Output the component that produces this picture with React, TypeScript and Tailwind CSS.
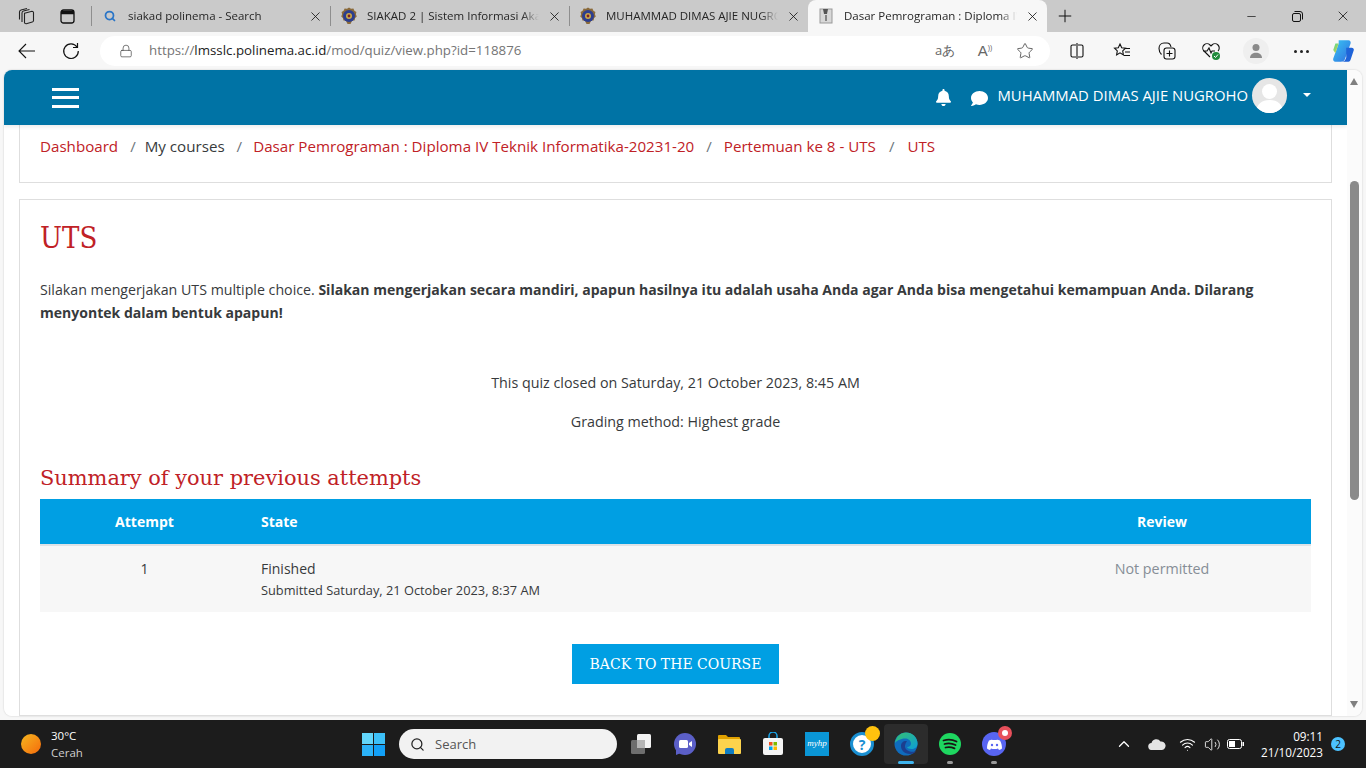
import React from "react";
import { Lock, Star, X, Plus, Minus, Search, ChevronUp, Wifi, Volume2 } from "lucide-react";
import { FaBell, FaComment } from "react-icons/fa";

const Crest = () => (
  <svg width="18" height="18" viewBox="0 0 18 18">
    <path d="M9 .5l2 1.300 2.400-.2 1 2.100 2 1.200-.5 2.300.9 2.200-1.700 1.600-.5 2.400-2.400.2L10.500 17H7.500l-1.700-3.400-2.400-.2-.5-2.400L1.200 9.400l.9-2.200-.5-2.300 2-1.200 1-2.100 2.400.2z" fill="#8a6a3a" />
    <circle cx="9" cy="9" r="6" fill="#2c3e8f" />
    <circle cx="9" cy="9" r="3" fill="#c9a94a" />
    <circle cx="9" cy="9" r="1.400" fill="#7b1f2b" />
  </svg>
);

const Tab = ({ icon, title, active, w }: { icon: React.ReactNode; title: string; active?: boolean; w: string }) => (
  <div className={`${w} h-[32px] shrink-0 flex items-center relative ${active ? "bg-[#f7f7f7] rounded-t-lg" : ""}`}>
    <div className="w-[36px] flex justify-center shrink-0">{icon}</div>
    <span className="flex-1 min-w-0 text-[11.500px] text-[#262626] whitespace-nowrap overflow-hidden" style={{ maskImage: "linear-gradient(to right,#000 90%,transparent)" }}>{title}</span>
    <div className="w-[30px] flex justify-center shrink-0"><X size={15} strokeWidth={1.300} color="#111" /></div>
  </div>
);

const Sep = () => <div className="w-px h-[20px] bg-[#8e8e8e] shrink-0" />;

const TbBtn = ({ children, w = "w-[45px]" }: { children: React.ReactNode; w?: string }) => (
  <div className={`${w} h-[30px] flex items-center justify-center shrink-0`}>{children}</div>
);

const TabStrip = () => (
  <div className="h-[32px] bg-[#cacaca] flex items-center shrink-0">
    <div className="w-[52px] flex justify-center shrink-0">
      <svg width="18" height="18" viewBox="0 0 18 18" fill="none" stroke="#222" strokeWidth="1.100">
        <path d="M7.500 6.200l7.500-2a1.500 1.500 0 0 1 1.500 1.300v8a1.500 1.500 0 0 1-1.200 1.500l-6 1.700a1.500 1.500 0 0 1-1.800-1.500z" />
        <path d="M5 15V6a2 2 0 0 1 1.500-2l6-1.500" />
        <path d="M2.500 12.500V5A2 2 0 0 1 4 3l6-1.500" />
      </svg>
    </div>
    <div className="w-[30px] flex justify-center shrink-0">
      <svg width="15" height="15" viewBox="0 0 15 15" fill="none" stroke="#111" strokeWidth="1.300">
        <rect x="1" y="1" width="13" height="13" rx="2.500" /><path d="M1 3.500h13" strokeWidth="3.500" />
      </svg>
    </div>
    <div className="w-[9px] shrink-0" />
    <Sep />
    <Tab w="w-[238px]" title="siakad polinema - Search" icon={<Search size={12} strokeWidth={3.500} color="#2a75c7" />} />
    <Sep />
    <Tab w="w-[238px]" title="SIAKAD 2 | Sistem Informasi Akademik" icon={<Crest />} />
    <Sep />
    <Tab w="w-[238px]" title="MUHAMMAD DIMAS AJIE NUGROHO" icon={<Crest />} />
    <Tab w="w-[239px]" active title="Dasar Pemrograman : Diploma IV Teknik" icon={
      <svg width="16" height="16" viewBox="0 0 16 16"><rect x="2" y="1" width="12" height="14" fill="#d8d8d8" stroke="#999" /><path d="M5 1h5l-1 5H6z" fill="#555" /><path d="M8 7v6" stroke="#333" /></svg>
    } />
    <div className="w-[36px] flex justify-center shrink-0"><Plus size={20} strokeWidth={1.200} color="#111" /></div>
    <div className="flex-1" />
    <div className="w-[46px] flex justify-center shrink-0"><Minus size={13} strokeWidth={1.300} color="#111" /></div>
    <div className="w-[46px] flex justify-center shrink-0">
      <svg width="11" height="11" viewBox="0 0 11 11" fill="none" stroke="#111"><rect x=".5" y="2.500" width="8" height="8" rx="1.500" /><path d="M2.500 .5H8A2.500 2.500 0 0 1 10.500 3v5.500" /></svg>
    </div>
    <div className="w-[46px] flex justify-center shrink-0"><X size={16} strokeWidth={1.200} color="#111" /></div>
  </div>
);

const Toolbar = () => (
  <div className="h-[38px] bg-[#f7f7f7] flex items-center shrink-0">
    <div className="w-[54px] flex justify-center shrink-0">
      <svg width="18" height="16" viewBox="0 0 18 16" fill="none" stroke="#111" strokeWidth="1.100"><path d="M17 8H1M8 1L1 8l7 7" /></svg>
    </div>
    <div className="w-[34px] flex justify-center shrink-0">
      <svg width="18" height="18" viewBox="0 0 18 18" fill="none" stroke="#111" strokeWidth="1.200"><path d="M15 5a7.300 7.300 0 1 0 1.300 4" /><path d="M15.500 1v4.500H11" /></svg>
    </div>
    <div className="w-[12px] shrink-0" />
    <div className="w-[950px] h-[30px] bg-white rounded-full flex items-center shrink-0">
      <div className="w-[49px] flex justify-center pl-[3px] shrink-0"><Lock size={14} strokeWidth={1.200} color="#444" /></div>
      <span className="text-[13.300px] text-[#757575] whitespace-nowrap">https://<span className="text-[#222]">lmsslc.polinema.ac.id</span>/mod/quiz/view.php?id=118876</span>
      <div className="flex-1" />
      <span className="w-[40px] text-center text-[13px] text-[#666]">aあ</span>
      <span className="w-[40px] text-center text-[15px] text-[#666]" style={{ fontFamily: "'Liberation Sans',sans-serif" }}>A<span className="text-[7px] align-super">))</span></span>
      <div className="w-[39px] flex justify-center"><Star size={18} strokeWidth={1.200} color="#555" /></div>
      <div className="w-[6px]" />
    </div>
    <TbBtn w="w-[54px]">
      <svg width="18" height="18" viewBox="0 0 18 18" fill="none" stroke="#111" strokeWidth="1.100"><path d="M8 3H4.500A1.500 1.500 0 0 0 3 4.500v9A1.500 1.500 0 0 0 4.500 15H8M10 3h3.500A1.500 1.500 0 0 1 15 4.500v9a1.500 1.500 0 0 1-1.500 1.500H10M9 1v16" /></svg>
    </TbBtn>
    <TbBtn w="w-[36px]">
      <svg width="18" height="18" viewBox="0 0 18 18" fill="none" stroke="#111" strokeWidth="1.100"><path d="M7 2l1.700 3.700 3.800.5-2.800 2.700.7 4-3.400-2-3.400 2 .7-4L1.500 6.200l3.800-.5zM12 6.500h5M12 10h5M11 13.500h6" /></svg>
    </TbBtn>
    <div className="w-[4px] shrink-0" />
    <TbBtn>
      <svg width="20" height="20" viewBox="0 0 20 20" fill="none" stroke="#111" strokeWidth="1.100"><rect x="7" y="7" width="11" height="11" rx="2.500" /><path d="M12.500 9.500v6M9.500 12.500h6M4.500 13.500C3 12 2 10 2 7.500 2 4.500 4 2 7 2h3c2 0 3.500 1.500 4 4" /></svg>
    </TbBtn>
    <TbBtn w="w-[44px]">
      <svg width="20" height="20" viewBox="0 0 20 20" fill="none"><path d="M9 16L3 10a4 4 0 0 1 6-6l1 1 1-1a4 4 0 0 1 6 6M2 10h4l2-3 2 5 1-2h3" stroke="#111" strokeWidth="1.100" /><circle cx="15" cy="15" r="4" fill="#1f8a3b" /><path d="M13 15l1.500 1.500 2.500-3" stroke="#fff" /></svg>
    </TbBtn>
    <TbBtn w="w-[46px]">
      <div className="w-[26px] h-[26px] rounded-full bg-[#efefef] flex items-center justify-center">
        <svg width="14" height="16" viewBox="0 0 14 16" fill="#8a8a8a"><circle cx="7" cy="4.500" r="3.500" /><path d="M1 15c0-7 12-7 12 0z" /></svg>
      </div>
    </TbBtn>
    <TbBtn w="w-[44px]">
      <div className="flex gap-[3px]"><div className="w-[3px] h-[3px] rounded-full bg-[#222]" /><div className="w-[3px] h-[3px] rounded-full bg-[#222]" /><div className="w-[3px] h-[3px] rounded-full bg-[#222]" /></div>
    </TbBtn>
    <TbBtn w="w-[40px]">
      <svg width="26" height="26" viewBox="0 0 24 24">
        <defs>
          <linearGradient id="cpa" x1="0" y1="0" x2="1" y2="1"><stop offset="0" stopColor="#39c5f3" /><stop offset="1" stopColor="#2f6fe0" /></linearGradient>
          <linearGradient id="cpb" x1="0" y1="0" x2="1" y2="1"><stop offset="0" stopColor="#3ddc97" /><stop offset="1" stopColor="#f5c83a" /></linearGradient>
        </defs>
        <path d="M8 2h9c1.500 0 2.500 1.500 2 3l-5 14c-.5 2-2 3-4 3H5c-1.500 0-2.500-1.500-2-3L8 5z" fill="url(#cpa)" />
        <path d="M15 9h5c1.500 0 2 1 2 2l-3 9c-.5 1.500-1.500 2-3 2h-6c3 0 4-1 5-4z" fill="#1f63d8" />
        <path d="M3 11l2-6h3l-3 9z" fill="url(#cpb)" />
      </svg>
    </TbBtn>
  </div>
);

const Navbar = () => (
  <div className="h-[55px] bg-[#0073a5] flex items-center pl-[48px] pr-[36px] shrink-0 relative z-10 shadow-[0_2px_4px_rgba(0,0,0,0.08)]">
    <div className="w-[27px] flex flex-col gap-[5.500px]">
      <div className="h-[3px] bg-white" /><div className="h-[3px] bg-white" /><div className="h-[3px] bg-white" />
    </div>
    <div className="flex-1" />
    <div className="flex items-center -mt-[4px]">
      <FaBell size={17} color="#fff" className="mt-[3px]" />
      <FaComment size={17} color="#fff" className="ml-[19px] mt-[6px]" />
      <span className="ml-[10px] text-[14.850px] text-white whitespace-nowrap">MUHAMMAD DIMAS AJIE NUGROHO</span>
      <div className="ml-[4px] w-[35px] h-[35px] rounded-full bg-[#e6e6e6] overflow-hidden flex items-end justify-center">
        <svg width="35" height="35" viewBox="0 0 35 35" fill="#fff"><circle cx="17.500" cy="13.500" r="7.500" /><path d="M4 35c0-9 6-13 13.500-13S31 26 31 35z" /></svg>
      </div>
      <div className="ml-[16px] w-0 h-0 border-x-[4px] border-x-transparent border-t-[4px] border-t-white -mt-[1px]" />
    </div>
  </div>
);

const L = ({ children }: { children: React.ReactNode }) => <span className="text-[#c02126]">{children}</span>;
const S = ({ cls }: { cls: string }) => <span className={`text-[#6c757d] ${cls}`}>/</span>;

const Main = () => (
  <div className="flex-1 min-w-0 bg-white flex flex-col overflow-hidden">
    <Navbar />
    <div className="px-[15px] flex-1 flex flex-col overflow-hidden">
      <div className="h-[58px] border-x border-b border-[#dedede] pl-[20px] pt-[10px] text-[15.150px] leading-[22px] text-[#373a3c] whitespace-nowrap shrink-0">
        <L>Dashboard</L><S cls="ml-[12px] mr-[9px]" />My courses<S cls="ml-[12px] mr-[11px]" /><L>Dasar Pemrograman : Diploma IV Teknik Informatika-20231-20</L><S cls="ml-[12px] mr-[12px]" /><L>Pertemuan ke 8 - UTS</L><S cls="ml-[13px] mr-[13px]" /><L>UTS</L>
      </div>
      <div className="mt-[16px] border border-[#dedede] flex-1 px-[20px] text-[#373a3c] text-[14.300px] overflow-hidden">
        <h1 className="text-[29px] leading-[36px] mt-[20px] text-[#c02126]" style={{ fontFamily: "'DejaVu Serif Condensed','DejaVu Serif',serif", fontStretch: "condensed" }}>UTS</h1>
        <p className="mt-[22px] leading-[23px] text-[14.200px]">Silakan mengerjakan UTS multiple choice. <b className="text-[14.040px]">Silakan mengerjakan secara mandiri, apapun hasilnya itu adalah usaha Anda agar Anda bisa mengetahui kemampuan Anda. Dilarang menyontek dalam bentuk apapun!</b></p>
        <p className="mt-[48px] text-center leading-[22px]">This quiz closed on Saturday, 21 October 2023, 8:45 AM</p>
        <p className="mt-[17px] text-center leading-[22px]">Grading method: Highest grade</p>
        <h3 className="mt-[32px] text-[20.900px] leading-[26px] text-[#c02126]" style={{ fontFamily: "'DejaVu Serif',serif" }}>Summary of your previous attempts</h3>
        <div className="mt-[8px]">
          <div className="h-[45px] bg-[#009fe3] text-white font-bold text-[14px] flex items-center">
            <div className="w-[209px] text-center">Attempt</div>
            <div className="flex-1 pl-[12px]">State</div>
            <div className="w-[298px] text-center">Review</div>
          </div>
          <div className="h-[68px] bg-[#f7f7f7] border-t-2 border-[#dee2e6] flex pt-[12px] text-[14px]">
            <div className="w-[209px] text-center leading-[22px]">1</div>
            <div className="flex-1 pl-[12px]">
              <div className="leading-[21px]">Finished</div>
              <div className="text-[12.800px] leading-[22px]">Submitted Saturday, 21 October 2023, 8:37 AM</div>
            </div>
            <div className="w-[298px] text-center leading-[22px] text-[#868e96] text-[14.300px]">Not permitted</div>
          </div>
        </div>
        <div className="mt-[32px] flex justify-center">
          <div className="h-[40px] w-[207px] bg-[#009fe3] text-white flex items-center justify-center text-[14px] whitespace-nowrap" style={{ fontFamily: "'DejaVu Serif',serif" }}>BACK TO THE COURSE</div>
        </div>
      </div>
    </div>
  </div>
);

const Scrollbar = () => (
  <div className="w-[15px] bg-[#fbfbfb] flex flex-col shrink-0 pl-[3px]">
    <div className="mt-[8px] w-0 h-0 border-x-[4.500px] border-x-transparent border-b-[7px] border-b-[#808080]" />
    <div className="mt-[96px] w-[9px] h-[319px] bg-[#8a8a8a] rounded-full" />
    <div className="flex-1" />
    <div className="mb-[8px] w-0 h-0 border-x-[4.500px] border-x-transparent border-t-[7px] border-t-[#808080]" />
  </div>
);

const Task = ({ children, active, dot }: { children: React.ReactNode; active?: boolean; dot?: boolean }) => (
  <div className={`w-[44px] h-[40px] flex items-center justify-center shrink-0 relative rounded ${active ? "bg-[#2c2c2c]" : ""}`}>
    {children}
    {dot && <div className="absolute bottom-0 left-1/2 -translate-x-1/2 w-[6px] h-[3px] rounded-full bg-[#9a9a9a]" />}
    {active && <div className="absolute bottom-0 left-1/2 -translate-x-1/2 w-[16px] h-[3px] rounded-full bg-[#3fb4ee]" />}
  </div>
);

const Taskbar = () => (
  <div className="h-[48px] bg-[#1c1c1c] flex items-center shrink-0 text-white relative">
    <div className="w-[351px] flex items-center shrink-0 pl-[21px]">
      <div className="w-[20px] h-[20px] rounded-full bg-gradient-to-br from-[#f3b61f] to-[#f4680b]" />
      <div className="ml-[10px] text-[11.500px] leading-[17px]">
        <div>30°C</div>
        <div className="text-[#cfcfcf]">Cerah</div>
      </div>
    </div>
    <Task>
      <div className="grid grid-cols-2 gap-[1px] w-[23px] h-[23px]">
        <div className="bg-[#62d6fb]" /><div className="bg-[#3cc0f8]" /><div className="bg-[#2bb2f8]" /><div className="bg-[#12a0f7]" />
      </div>
    </Task>
    <div className="ml-[4px] w-[218px] h-[30px] rounded-full bg-[#f2f2f2] flex items-center pl-[11px] shrink-0">
      <Search size={15} strokeWidth={2} color="#222" />
      <span className="ml-[10px] text-[13px] text-[#555] mt-[1px]">Search</span>
    </div>
    <div className="w-[2px] shrink-0" />
    <Task>
      <svg width="24" height="24" viewBox="0 0 24 24"><rect x="2" y="8" width="14" height="14" rx="1.500" fill="#6e6e6e" /><rect x="8" y="2" width="14" height="14" rx="1.500" fill="#f3f3f3" /><rect x="8" y="8" width="8" height="8" fill="#b5b5b5" /></svg>
    </Task>
    <Task>
      <svg width="24" height="24" viewBox="0 0 24 24"><circle cx="12" cy="12" r="11" fill="#5b5fc7" /><path d="M3 17v6l5-2z" fill="#5b5fc7" /><rect x="6" y="8" width="9" height="8" rx="1.500" fill="#fff" /><path d="M16 11l3-2v6l-3-2z" fill="#fff" /></svg>
    </Task>
    <Task>
      <svg width="24" height="22" viewBox="0 0 24 22"><path d="M1 3a1 1 0 0 1 1-1h7l2 2h11a1 1 0 0 1 1 1v3H1z" fill="#e0a100" /><rect x="1" y="6" width="23" height="15" rx="1" fill="#fcd34d" /><path d="M8 21v-4a2 2 0 0 1 2-2h5a2 2 0 0 1 2 2v4z" fill="#0f7dc2" /></svg>
    </Task>
    <Task>
      <svg width="22" height="24" viewBox="0 0 22 24"><path d="M7 7V4a4 4 0 0 1 8 0v3" fill="none" stroke="#1aa3e8" strokeWidth="1.500" /><rect x="1" y="6" width="20" height="17" rx="2" fill="#f5f5f5" /><rect x="7" y="10" width="3.500" height="3.500" fill="#f25022" /><rect x="11.500" y="10" width="3.500" height="3.500" fill="#7fba00" /><rect x="7" y="14.500" width="3.500" height="3.500" fill="#00a4ef" /><rect x="11.500" y="14.500" width="3.500" height="3.500" fill="#ffb900" /></svg>
    </Task>
    <Task>
      <div className="w-[24px] h-[24px] bg-[#0a96d6] flex items-center justify-center text-[9px] italic text-white" style={{ fontFamily: "'Liberation Serif',serif" }}>myhp</div>
    </Task>
    <div className="w-[1px] shrink-0" />
    <Task>
      <div className="relative w-[24px] h-[24px] rounded-full bg-white border-[3px] border-[#1a8fd1] flex items-center justify-center">
        <span className="text-[14px] font-bold text-[#1a8fd1]">?</span>
        <div className="absolute -top-[9px] -right-[9px] w-[15px] h-[15px] rounded-full bg-[#ffc20e]" />
      </div>
    </Task>
    <Task active>
      <svg width="24" height="24" viewBox="0 0 24 24">
        <defs><linearGradient id="edg" x1="0" y1="0" x2="1" y2="1"><stop offset="0" stopColor="#36c26e" /><stop offset="1" stopColor="#0c9dd8" /></linearGradient></defs>
        <circle cx="12" cy="12" r="11.500" fill="#0f6cbd" />
        <path d="M1 11C2 4 7 .5 12 .5c6 0 11.500 4.500 11.500 11 0 4-3 5.500-6 5.500-2.500 0-4-1-4.500-2 2.500 0 4-1.500 4-3.500 0-3-3-5-6-5S3 8 1 11z" fill="url(#edg)" />
        <path d="M12 9c-3 0-5 2-5 5 0 4 3 8 9 8 3 0 5-1 6-3-2 1-4 1-6 .5-3-1-5.500-3-5-6 .2-1.500 1-3 2-4.500z" fill="#1b3f8f" />
      </svg>
    </Task>
    <Task dot>
      <svg width="24" height="24" viewBox="0 0 24 24"><circle cx="12" cy="12" r="11" fill="#1ed760" /><path d="M5.500 8.500c4-1.200 9-1 13 1M6.500 12c3.500-1 7.500-.7 11 1M7.500 15.500c3-.8 6-.5 9 .8" fill="none" stroke="#191414" strokeWidth="1.800" strokeLinecap="round" /></svg>
    </Task>
    <Task dot>
      <div className="relative">
        <div className="w-[24px] h-[24px] rounded-full bg-[#5865f2] flex items-center justify-center">
          <svg width="15" height="11" viewBox="0 0 15 11"><path d="M2 1.500C4 .5 5 .5 5.500 1h4c.5-.5 1.500-.5 3.500.5 1.500 2.500 2 5.500 2 8-1 .8-2 1.200-3 1.500L11 9.500c-2 .7-5 .7-7 0L3 11C2 10.700 1 10.300 0 9.500c0-2.500.5-5.500 2-8z" fill="#fff" /><circle cx="5" cy="6" r="1.200" fill="#5865f2" /><circle cx="10" cy="6" r="1.200" fill="#5865f2" /></svg>
        </div>
        <div className="absolute -top-[6px] -right-[6px] w-[14px] h-[14px] rounded-full bg-[#e8505b] flex items-center justify-center"><div className="w-[6px] h-[6px] rounded-full bg-white" /></div>
      </div>
    </Task>
    <div className="flex-1" />
    <div className="w-[34px] flex justify-center shrink-0"><ChevronUp size={18} strokeWidth={1.700} color="#fff" /></div>
    <div className="w-[32px] flex justify-center shrink-0">
      <svg width="18" height="12" viewBox="0 0 18 12" fill="#e4e4e4"><path d="M4 12a3.500 3.500 0 0 1-.5-7A5 5 0 0 1 12.500 3.500 4.200 4.200 0 0 1 14 12z" /></svg>
    </div>
    <div className="w-[28px] flex justify-center shrink-0"><Wifi size={17} strokeWidth={1.500} color="#fff" /></div>
    <div className="w-[22px] flex justify-center shrink-0"><Volume2 size={17} strokeWidth={1.200} color="#fff" /></div>
    <div className="w-[26px] flex justify-center shrink-0">
      <svg width="18" height="12" viewBox="0 0 18 12" fill="none"><rect x=".5" y="1.500" width="14" height="9" rx="2" stroke="#fff" /><rect x="2" y="3" width="6" height="6" fill="#fff" /><rect x="15.500" y="4" width="1.500" height="4" fill="#fff" /></svg>
    </div>
    <div className="w-[74px] text-right text-[11.700px] leading-[16px] shrink-0">
      <div>09:11</div>
      <div>21/10/2023</div>
    </div>
    <div className="ml-[8px] mr-[21px] w-[14px] h-[14px] rounded-full bg-[#4cc2ff] text-[#111] text-[10px] flex items-center justify-center shrink-0">2</div>
  </div>
);

export default function App() {
  return (
    <div className="w-[1366px] h-[768px] overflow-hidden flex flex-col bg-[#f7f7f7]" style={{ fontFamily: "'Open Sans',sans-serif" }}>
      <TabStrip />
      <Toolbar />
      <div className="flex-1 min-h-0 px-[4px] pb-[4px] flex flex-col">
        <div className="flex-1 min-h-0 flex rounded-lg overflow-hidden shadow-[0_0_2px_rgba(0,0,0,0.2)]">
          <Main />
          <Scrollbar />
        </div>
      </div>
      <Taskbar />
    </div>
  );
}
